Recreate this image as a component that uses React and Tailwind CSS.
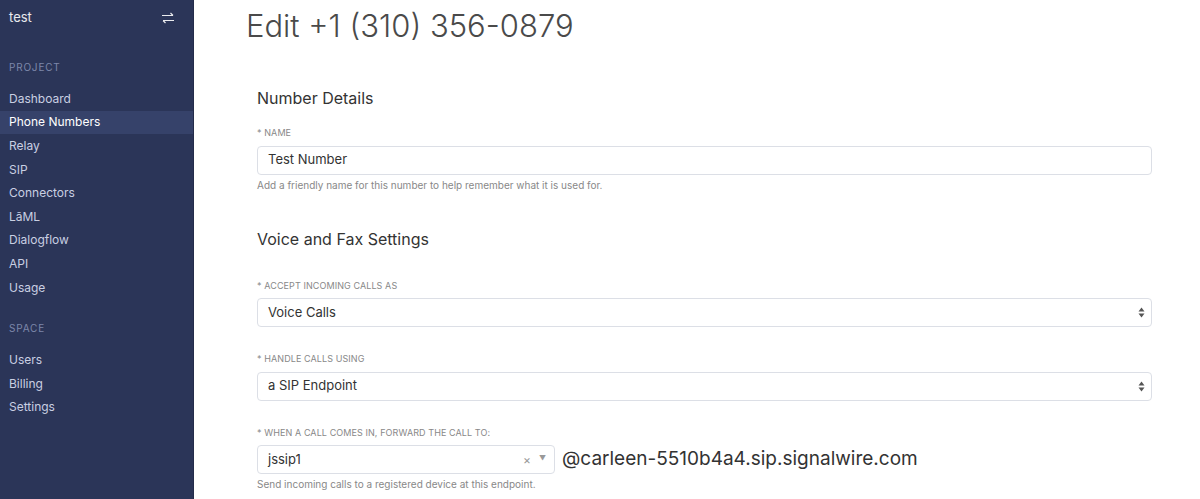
import React from 'react'

const projectLinks = ['Dashboard', 'Phone Numbers', 'Relay', 'SIP', 'Connectors', 'LāML', 'Dialogflow', 'API', 'Usage']
const spaceLinks = ['Users', 'Billing', 'Settings']

function SwapIcon() {
  return (
    <svg width="14" height="12" viewBox="0 0 14 12" fill="none" stroke="currentColor" strokeWidth="1.2">
      <path d="M1 3.5h11M9.5 1l2.5 2.5" />
      <path d="M13 8.5H2M4.5 11L2 8.5" />
    </svg>
  )
}

function Arrows() {
  return (
    <svg width="7" height="11" viewBox="0 0 7 11" fill="#555">
      <path d="M3.5 0.5L6.5 4.5H0.5Z" />
      <path d="M3.5 10.5L0.5 6.5H6.5Z" />
    </svg>
  )
}

function Label({ children }) {
  return <div className="text-[9px] uppercase text-[#888] tracking-[0.01em] mb-[6px]">* {children}</div>
}

function Sidebar() {
  return (
    <aside className="w-[194px] shrink-0 bg-[#2b3558] border-r border-[#242c4a] text-[#d6dbea] min-h-[499px]">
      <div className="flex items-center justify-between pl-[9px] pr-[18px] h-[35px] text-[13px] text-white/90">
        <span>test</span>
        <SwapIcon />
      </div>
      <div className="pl-[9px] mt-[25px] text-[10px] tracking-[0.08em] text-[#7d87aa]">PROJECT</div>
      <nav className="mt-[12px]">
        {projectLinks.map((l) => (
          <div
            key={l}
            className={`pl-[9px] h-[23.6px] flex items-center text-[12px] ${l === 'Phone Numbers' ? 'bg-[#36426a] text-white' : 'text-[#c9cfe2]'}`}
          >
            {l}
          </div>
        ))}
      </nav>
      <div className="pl-[9px] mt-[22px] text-[10px] tracking-[0.08em] text-[#7d87aa]">SPACE</div>
      <nav className="mt-[12px]">
        {spaceLinks.map((l) => (
          <div key={l} className="pl-[9px] h-[23.6px] flex items-center text-[12px] text-[#c9cfe2]">
            {l}
          </div>
        ))}
      </nav>
    </aside>
  )
}

function SelectBox({ value }) {
  return (
    <div className="h-[29px] border border-[#dcdfe6] rounded-[4px] flex items-center justify-between pl-[10px] pr-[6px] text-[13px] text-[#333]">
      <span>{value}</span>
      <Arrows />
    </div>
  )
}

export default function App() {
  return (
    <div className="flex bg-white h-[499px] overflow-hidden" style={{ fontFamily: 'Inter, "Noto Sans", sans-serif' }}>
      <Sidebar />
      <main className="flex-1 pl-[52px] pr-[48px]">
        <h1 className="text-[31px] font-light text-[#4a4a4a] mt-[6px] leading-[40px]">Edit +1 (310) 356-0879</h1>
        <div className="pl-[11px]">
          <h2 className="text-[16px] text-[#333] mt-[42px] leading-[20px]">Number Details</h2>
          <div className="mt-[18px]">
            <Label>NAME</Label>
            <div className="h-[29px] border border-[#dcdfe6] rounded-[4px] flex items-center pl-[10px] text-[13px] text-[#333]">
              Test Number
            </div>
            <div className="text-[10px] text-[#888] mt-[3px]">Add a friendly name for this number to help remember what it is used for.</div>
          </div>
          <h2 className="text-[16px] text-[#333] mt-[36px] leading-[20px]">Voice and Fax Settings</h2>
          <div className="mt-[30px]">
            <Label>ACCEPT INCOMING CALLS AS</Label>
            <SelectBox value="Voice Calls" />
          </div>
          <div className="mt-[25px]">
            <Label>HANDLE CALLS USING</Label>
            <SelectBox value="a SIP Endpoint" />
          </div>
          <div className="mt-[25px]">
            <Label>WHEN A CALL COMES IN, FORWARD THE CALL TO:</Label>
            <div className="flex items-center gap-[7px]">
              <div className="w-[298px] h-[29px] border border-[#dcdfe6] rounded-[4px] flex items-center justify-between pl-[10px] pr-[8px] text-[13px] text-[#333]">
                <span>jssip1</span>
                <span className="flex items-center gap-[8px] text-[#999]">
                  <span className="text-[12px]">×</span>
                  <span className="text-[7px]">▼</span>
                </span>
              </div>
              <span className="text-[19px] text-[#333]">@carleen-5510b4a4.sip.signalwire.com</span>
            </div>
            <div className="text-[10px] text-[#888] mt-[3px]">Send incoming calls to a registered device at this endpoint.</div>
          </div>
        </div>
      </main>
    </div>
  )
}
